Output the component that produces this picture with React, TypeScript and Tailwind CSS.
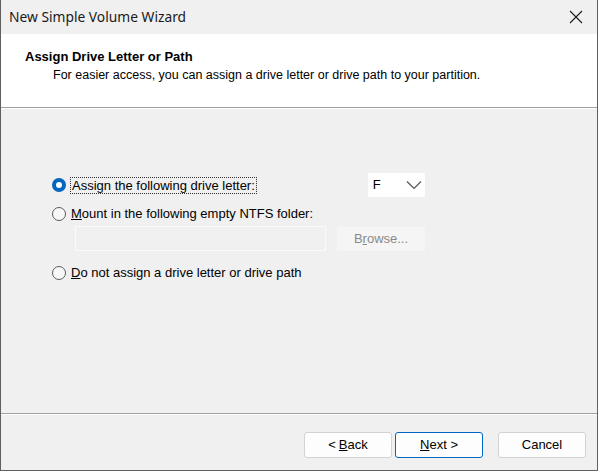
import React from 'react';

const font = { fontFamily: '"Liberation Sans", Arial, sans-serif' };

function Radio({ checked }: { checked?: boolean }) {
  if (checked) {
    return (
      <span className="flex h-[14px] w-[14px] shrink-0 items-center justify-center rounded-full bg-[#0067c0]">
        <span className="h-[6px] w-[6px] rounded-full bg-white" />
      </span>
    );
  }
  return <span className="h-[14px] w-[14px] shrink-0 rounded-full border border-[#5c5c5c] bg-[#f7f7f7]" />;
}

function Btn({ children, primary }: { children: React.ReactNode; primary?: boolean }) {
  return (
    <button
      className={`flex h-[26px] w-[88px] items-center justify-center rounded-[3px] text-[13px] leading-[16px] text-black ${
        primary ? 'border border-[#0067c0] bg-[#fdfdfd]' : 'border border-[#d3d3d3] bg-[#fdfdfd]'
      }`}
    >
      {children}
    </button>
  );
}

export default function App() {
  return (
    <div className="h-[473px] w-[600px] bg-white leading-[16px]" style={font}>
      <div className="flex h-[471px] w-[598px] flex-col border-x border-b border-[#5f5f5f] bg-[#f0f0f0]">
        {/* title bar */}
        <div className="flex h-[34px] shrink-0 items-center justify-between pl-[8px] pr-[12px]">
          <span
            className="text-[13.8px] leading-[18px] text-[#1a1a1a]"
            style={{ fontFamily: '"Noto Sans", "Open Sans", sans-serif' }}
          >
            New Simple Volume Wizard
          </span>
          <svg width="14" height="14" viewBox="0 0 14 14" className="mr-[2px]">
            <path d="M1 1 L13 13 M13 1 L1 13" stroke="#1a1a1a" strokeWidth="1.1" fill="none" />
          </svg>
        </div>

        {/* header */}
        <div className="h-[74px] shrink-0 border-b border-[#a0a0a0] bg-white pl-[24px] pt-[15px]">
          <div className="text-[13px] font-bold text-black">Assign Drive Letter or Path</div>
          <div className="mt-[2px] pl-[28px] text-[12.5px] text-black">
            For easier access, you can assign a drive letter or drive path to your partition.
          </div>
        </div>
        <div className="h-px shrink-0 bg-white" />

        {/* body */}
        <div className="flex flex-1 flex-col pl-[51px] pt-[64px]">
          <div className="flex items-center">
            <Radio checked />
            <span className="ml-[4px] border border-dotted border-[#333] px-[1px] text-[13px] leading-[15px] text-black">
              Assign the following drive letter:
            </span>
            <div className="ml-[111px] flex h-[24px] w-[57px] items-center justify-between bg-white pl-[5px] pr-[3px]">
              <span className="text-[13px] text-black">F</span>
              <svg width="16" height="10" viewBox="0 0 16 10">
                <path d="M1 1.5 L8 8.5 L15 1.5" stroke="#555" strokeWidth="1.2" fill="none" />
              </svg>
            </div>
          </div>

          <div className="mt-[9px] flex items-center">
            <Radio />
            <span className="ml-[5px] text-[13px] text-black">
              <span className="underline">M</span>ount in the following empty NTFS folder:
            </span>
          </div>

          <div className="mt-[4px] flex items-center pl-[23px]">
            <div className="h-[25px] w-[251px] border border-[#fafafa] bg-[#f0f0f0]" />
            <div className="ml-[11px] flex h-[24px] w-[88px] items-center justify-center bg-[#f5f5f5] text-[13px] text-[#8a8a8a]">
              B<span className="underline">r</span>owse...
            </div>
          </div>

          <div className="mt-[14px] flex items-center">
            <Radio />
            <span className="ml-[5px] text-[13px] text-black">
              <span className="underline">D</span>o not assign a drive letter or drive path
            </span>
          </div>
        </div>

        {/* footer */}
        <div className="h-px shrink-0 bg-[#a0a0a0]" />
        <div className="h-px shrink-0 bg-white" />
        <div className="flex h-[55px] shrink-0 items-start justify-end pr-[11px] pt-[17px]">
          <Btn>
            &lt; <span className="ml-[3px] underline">B</span>ack
          </Btn>
          <div className="ml-[3px]">
            <Btn primary>
              <span className="underline">N</span>ext &gt;
            </Btn>
          </div>
          <div className="ml-[15px]">
            <Btn>Cancel</Btn>
          </div>
        </div>
      </div>
    </div>
  );
}
